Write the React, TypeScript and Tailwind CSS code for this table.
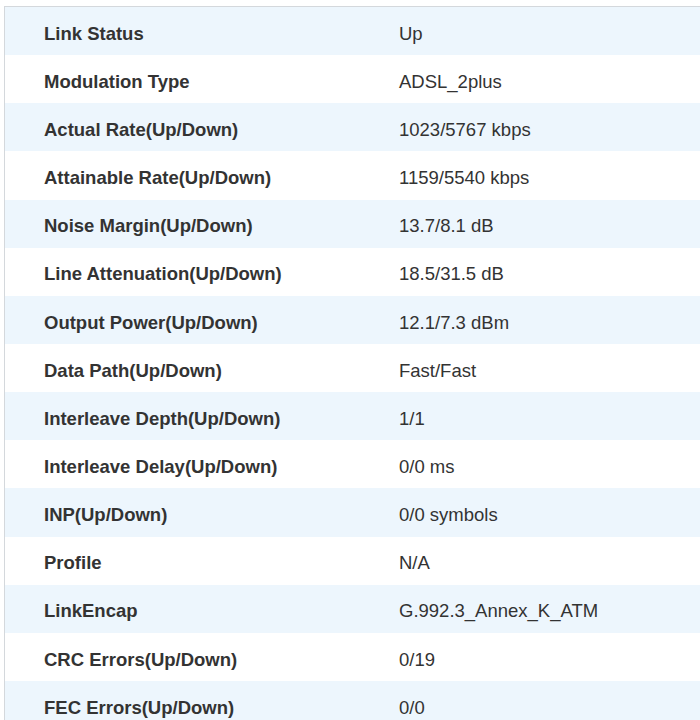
const rows: [string, string][] = [
  ["Link Status", "Up"],
  ["Modulation Type", "ADSL_2plus"],
  ["Actual Rate(Up/Down)", "1023/5767 kbps"],
  ["Attainable Rate(Up/Down)", "1159/5540 kbps"],
  ["Noise Margin(Up/Down)", "13.7/8.1 dB"],
  ["Line Attenuation(Up/Down)", "18.5/31.5 dB"],
  ["Output Power(Up/Down)", "12.1/7.3 dBm"],
  ["Data Path(Up/Down)", "Fast/Fast"],
  ["Interleave Depth(Up/Down)", "1/1"],
  ["Interleave Delay(Up/Down)", "0/0 ms"],
  ["INP(Up/Down)", "0/0 symbols"],
  ["Profile", "N/A"],
  ["LinkEncap", "G.992.3_Annex_K_ATM"],
  ["CRC Errors(Up/Down)", "0/19"],
  ["FEC Errors(Up/Down)", "0/0"],
];

export default function App() {
  return (
    <div className="h-[720px] w-[700px] overflow-hidden bg-white pl-1 pt-[6px] font-['Liberation_Sans',Arial,sans-serif] text-[18.5px] text-[#333]">
      <div className="w-[720px] border-l border-t border-[#d4d8dc]">
        {rows.map(([label, value], i) => (
          <div
            key={label}
            className={`flex h-[48.15px] items-center pt-[5px] ${i % 2 === 0 ? "bg-[#edf6fd]" : "bg-white"}`}
          >
            <div className="w-[394px] shrink-0 pl-[39px] font-bold">{label}</div>
            <div>{value}</div>
          </div>
        ))}
      </div>
    </div>
  );
}
